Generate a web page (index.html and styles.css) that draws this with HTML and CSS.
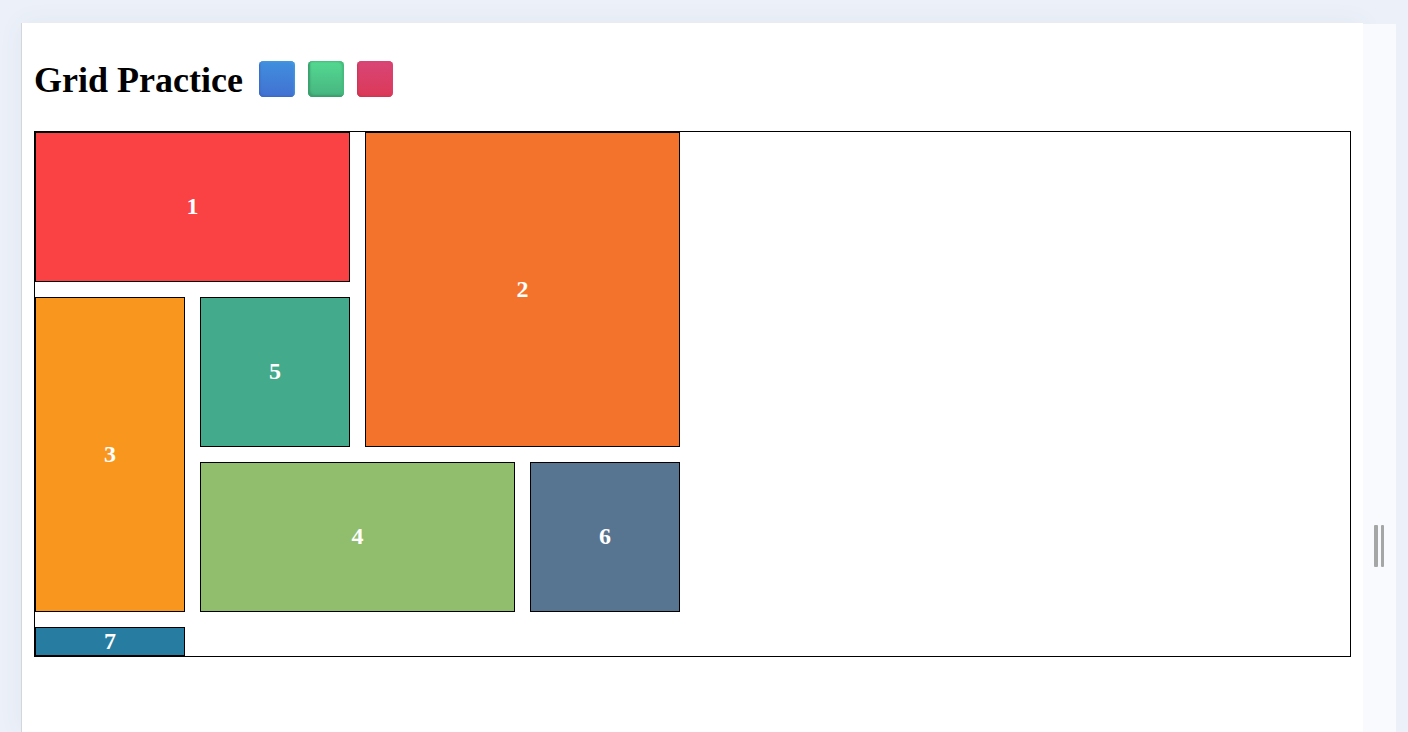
FILE: index.html
```html
<!DOCTYPE html>
<html lang="en">
<head>
<meta charset="utf-8">
<title>Grid Practice</title>
<link rel="stylesheet" href="styles.css">
</head>
<body>
<main class="page">
  <h1 class="title"><span class="title-text">Grid Practice</span>
    <span class="swatch blue"></span><span class="swatch green"></span><span class="swatch pink"></span>
  </h1>
  <div class="grid">
    <div class="item one">1</div>
    <div class="item two">2</div>
    <div class="item three">3</div>
    <div class="item four">4</div>
    <div class="item five">5</div>
    <div class="item six">6</div>
    <div class="item seven">7</div>
  </div>
</main>
<aside class="resizer"><span class="grip"></span><span class="grip"></span></aside>
</body>
</html>
```
FILE: styles.css
```css
* { box-sizing: border-box; }
body {
  margin: 0;
  height: 732px;
  overflow: hidden;
  padding: 23px 12px 0 21px;
  display: flex;
  background: #ebf0f9;
  font-family: "Liberation Serif", "Times New Roman", serif;
}
.page {
  flex: 1;
  padding: 33px 12px 0;
  background: #fff;
  border-left: 1px solid #d3d7dd;
  box-shadow: 0 0 24px rgba(90, 100, 110, 0.06);
}
.title {
  display: flex;
  align-items: center;
  margin: 0 0 29px;
  height: 46px;
  font-size: 36px;
  line-height: 46px;
  color: #000;
}
.title-text {
  width: 225px;
  white-space: nowrap;
  padding-top: 1px;
}
.swatch {
  width: 35.6px;
  height: 36px;
  margin-right: 13.6px;
  border-radius: 4.5px;
}
.blue {
  background: linear-gradient(#408fde, #4271d2);
  box-shadow: inset 2px -2px 2px -1px #3c68c4, inset -2px 2px 2px -1px #429be0;
}
.green {
  background: linear-gradient(#54d991, #46b480);
  box-shadow: inset 2px -2px 2px #3c9d6d, inset -2px 1px 2px #46b97c;
}
.pink {
  background: linear-gradient(#d84577, #dc3957);
  box-shadow: inset 2px -2px 2px -1px #c9354f, inset -2px 2px 2px -1px #dc4070;
}
.grid {
  display: grid;
  grid-template-columns: repeat(4, 150px);
  grid-template-rows: repeat(3, 150px) 29px;
  gap: 15px;
  border: 1px solid #000;
}
.item {
  display: flex;
  align-items: center;
  justify-content: center;
  padding-bottom: 1px;
  border: 1px solid #000;
  color: #fff;
  font-size: 24px;
  font-weight: bold;
  line-height: 27px;
}
.one { grid-area: 1 / 1 / 2 / 3; background: #fa4144; }
.two { grid-area: 1 / 3 / 3 / 5; background: #f4732c; }
.three { grid-area: 2 / 1 / 4 / 2; background: #f9961e; }
.four { grid-area: 3 / 2 / 4 / 4; background: #90be6d; }
.five { grid-area: 2 / 2 / 3 / 3; background: #43aa8b; }
.six { grid-area: 3 / 4 / 4 / 5; background: #577590; }
.seven { grid-area: 4 / 1 / 5 / 2; background: #277da1; }
.resizer {
  position: relative;
  display: flex;
  align-items: flex-start;
  gap: 3px;
  width: 33px;
  margin-top: 1px;
  padding: 501px 0 0 11px;
  background: #f8fafe;
}
.grip {
  width: 3.5px;
  height: 42px;
  background: #a5a7a7;
  border-radius: 1px;
}
```
